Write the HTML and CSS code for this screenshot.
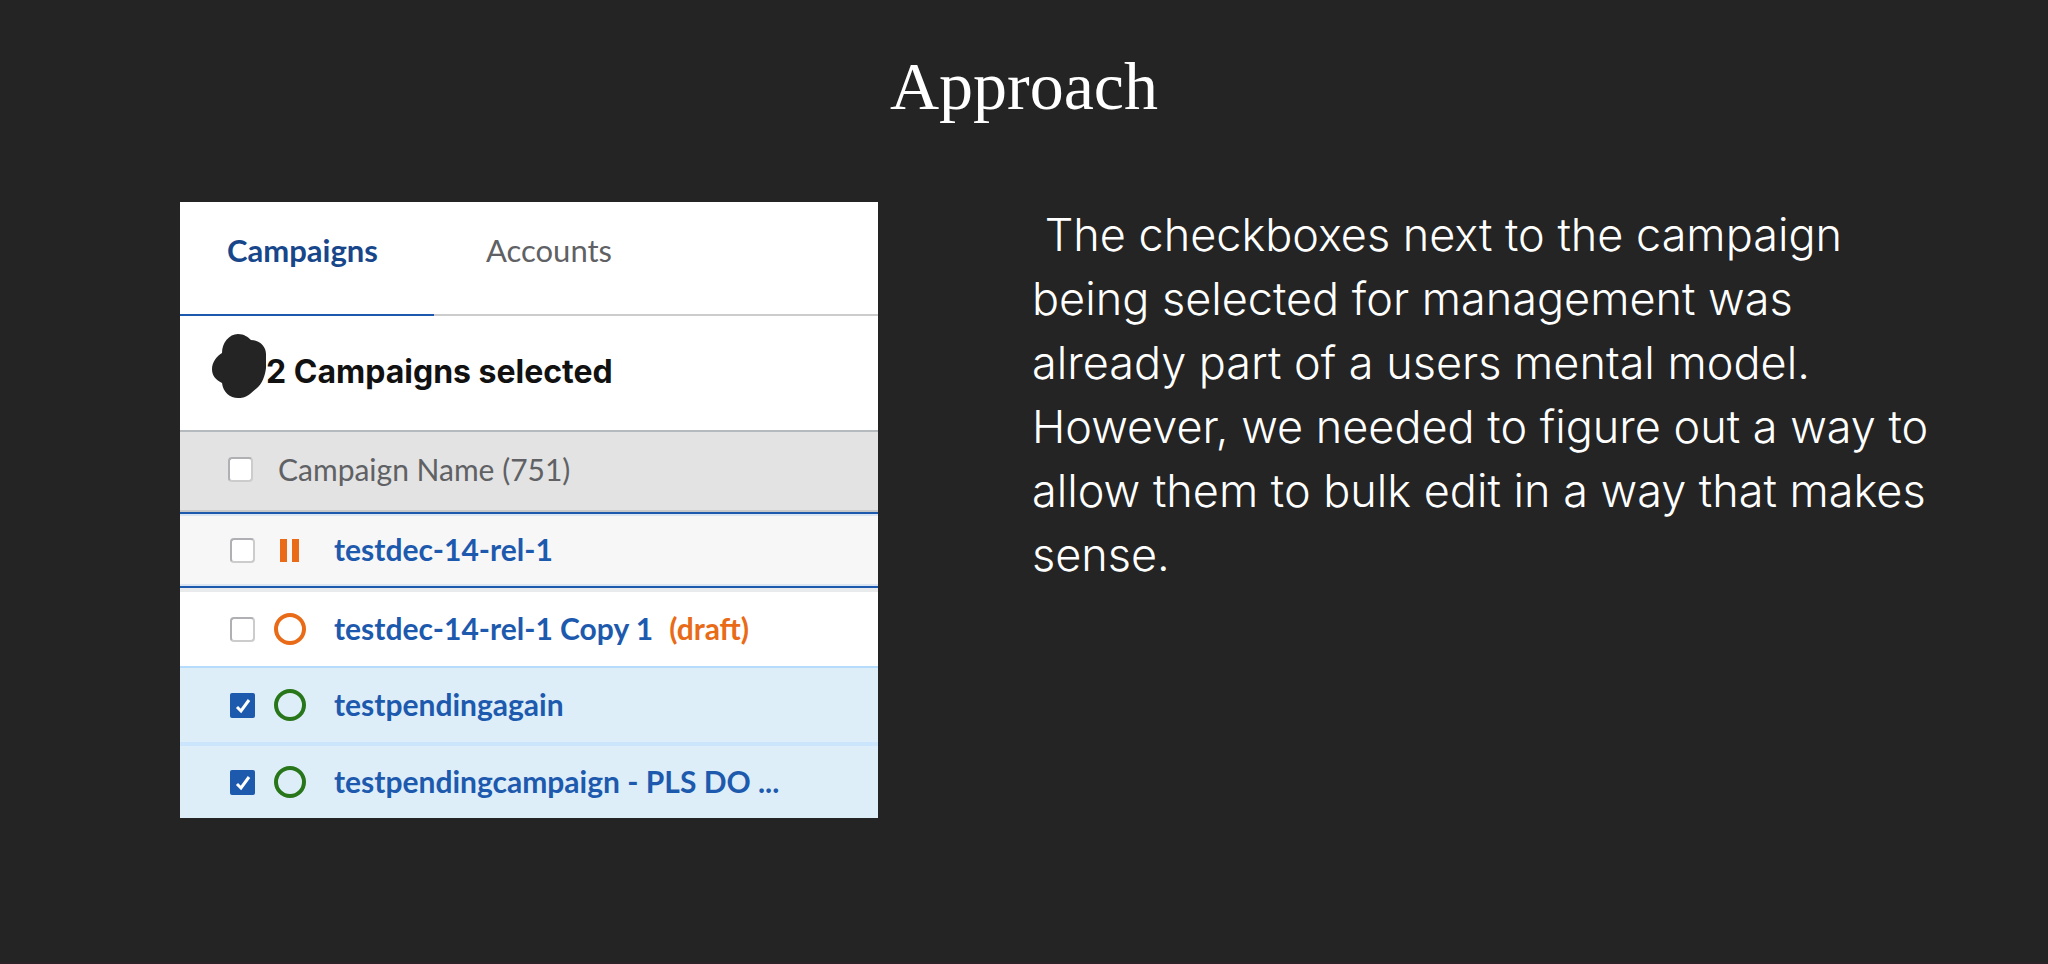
FILE: index.html
```html
<!DOCTYPE html>
<html lang="en">
<head>
<meta charset="utf-8">
<title>Approach</title>
<link rel="stylesheet" href="styles.css">
</head>
<body>
<main class="slide">
  <h1 class="slide-title">Approach</h1>
  <div class="columns">
    <section class="panel" aria-label="Campaign list">
      <nav class="tabs">
        <button class="tab tab-active" type="button">Campaigns</button>
        <button class="tab" type="button">Accounts</button>
      </nav>
      <div class="selection">
        <svg class="blob" viewBox="0 0 54 64" aria-hidden="true"><path d="M26 0C32 0 36 3 39 6C47 6 54 12 54 20L54 34C53 42 50 50 45 54L38 60C33 64 29 64 26 64C18 64 11 58 10 49C4 46 0 42 0 35C0 28 5 22 10 19C10 9 17 0 26 0Z"/></svg>
        <h2 class="selection-text">2 Campaigns selected</h2>
      </div>
      <table class="list">
        <colgroup><col class="col-check"><col class="col-status"><col></colgroup>
        <thead>
          <tr>
            <th class="cell-check"><input class="check" type="checkbox" aria-label="Select all campaigns"></th>
            <th class="head-name" colspan="2" scope="col">Campaign Name (751)</th>
          </tr>
        </thead>
        <tbody>
          <tr class="row-focus">
            <td class="cell-check"><input class="check" type="checkbox" aria-label="Select testdec-14-rel-1"></td>
            <td><svg class="status" viewBox="0 0 32 32" role="img" aria-label="Paused"><path class="pause" d="M6 5h7v23H6zM18 5h7v23h-7z"/></svg></td>
            <td class="cell-name"><a class="name" href="#">testdec-14-rel-1</a></td>
          </tr>
          <tr class="row-plain">
            <td class="cell-check"><input class="check" type="checkbox" aria-label="Select testdec-14-rel-1 Copy 1"></td>
            <td><svg class="status ring-draft" viewBox="0 0 32 32" role="img" aria-label="Draft"><circle cx="16" cy="16" r="14"/></svg></td>
            <td class="cell-name"><a class="name" href="#">testdec-14-rel-1 Copy 1</a><span class="draft">(draft)</span></td>
          </tr>
          <tr class="row-picked">
            <td class="cell-check"><input class="check" type="checkbox" checked aria-label="Select testpendingagain"></td>
            <td><svg class="status ring-live" viewBox="0 0 32 32" role="img" aria-label="Live"><circle cx="16" cy="16" r="14"/></svg></td>
            <td class="cell-name"><a class="name" href="#">testpendingagain</a></td>
          </tr>
          <tr class="row-picked row-last">
            <td class="cell-check"><input class="check" type="checkbox" checked aria-label="Select testpendingcampaign"></td>
            <td><svg class="status ring-live" viewBox="0 0 32 32" role="img" aria-label="Live"><circle cx="16" cy="16" r="14"/></svg></td>
            <td class="cell-name"><a class="name" href="#">testpendingcampaign - PLS DO ...</a></td>
          </tr>
        </tbody>
      </table>
    </section>
    <p class="copy">&nbsp;The checkboxes next to the campaign being selected for management was already part of a users mental model. However, we needed to figure out a way to allow them to bulk edit in a way that makes sense.</p>
  </div>
</main>
</body>
</html>
```
FILE: styles.css
```css
* { box-sizing: border-box; }

body {
  margin: 0;
  background: #242424;
  color: #fff;
  font-family: Lato, "Liberation Sans", sans-serif;
}

.slide {
  min-height: 100vh;
  padding: 46px 100px 48px 180px;
  border-bottom: 2px solid #2a2226;
}

.slide-title {
  margin: 0 0 76px -80px;
  font: 400 68px/80px "Liberation Serif", serif;
  text-align: center;
}

.columns {
  display: grid;
  grid-template-columns: 698fr 916fr;
  gap: 154px;
  align-items: start;
}

.panel {
  background: #fff;
  font-size: 30px;
  line-height: 36px;
}

.tabs {
  display: flex;
  border-bottom: 2px solid #ccc;
}

.tab {
  margin: 0 0 -2px;
  padding: 30px 52px 46px;
  border: 0;
  border-bottom: 2px solid transparent;
  background: none;
  color: #606164;
  font: inherit;
  font-size: 31px;
}

.tab-active {
  padding-left: 47px;
  padding-right: 56px;
  border-bottom-color: #1d5aae;
  color: #17478a;
  font-weight: 700;
}

.selection {
  display: flex;
  align-items: center;
  height: 114px;
  padding: 0 32px 14px;
}

.blob {
  flex: none;
  width: 54px;
  height: 64px;
  fill: #242424;
}

.selection-text {
  margin: 0;
  padding-top: 12px;
  color: #111;
  font-family: Inter, "Liberation Sans", sans-serif;
  font-size: 32px;
  font-weight: 700;
}

.list {
  width: 100%;
  border-spacing: 0;
  table-layout: fixed;
}

.col-check { width: 94px; }
.col-status { width: 60px; }

.list th,
.list td {
  padding: 0;
  text-align: left;
  vertical-align: middle;
}

.list th {
  height: 82px;
  border-top: 2px solid #b5babf;
  border-bottom: 2px solid #c8c8c8;
  background: #e3e3e3;
}

.list .head-name {
  padding-left: 4px;
  padding-bottom: 4px;
  color: #606164;
  font-weight: 400;
}

.list .cell-check { padding-left: 50px; }
.list .cell-name { padding-bottom: 3px; }

.list th.cell-check {
  padding-left: 48px;
  padding-bottom: 4px;
}

.row-focus td {
  height: 76px;
  border-top: 2px solid #1d5aae;
  border-bottom: 2px solid #1d5aae;
  background: #f7f7f7;
  box-shadow: inset 0 2px #dce6f3, inset 0 -2px #dce6f3;
}

.row-plain td {
  height: 80px;
  border-top: 4px solid #e8eaeb;
  border-bottom: 2px solid #b5dcfb;
}

.row-picked td {
  height: 74px;
  background: #deeef9;
}

.row-last td {
  height: 76px;
  border-top: 4px solid #cbe5fc;
}

.check {
  display: block;
  width: 25px;
  height: 25px;
  margin: 0;
  appearance: none;
  border: 2px solid #b0b0b4;
  border-right-color: #ccc;
  border-bottom-color: #ccc;
  border-radius: 4px;
  background: #fff;
}

.check:checked {
  border: 0;
  border-radius: 2px;
  background: #1d5aae url("data:image/svg+xml,%3Csvg xmlns='http://www.w3.org/2000/svg' viewBox='0 0 25 25'%3E%3Cpath d='M7 14l4 4L19 7' fill='none' stroke='white' stroke-width='3'/%3E%3C/svg%3E");
}

.status {
  display: block;
  width: 32px;
  height: 32px;
  fill: none;
  stroke-width: 4;
}

.pause { fill: #e96a17; }
.ring-draft { stroke: #e96a17; }
.ring-live { stroke: #28761a; }

.name {
  color: #1d5aae;
  font-weight: 700;
  text-decoration: none;
}

.draft {
  margin-left: 16px;
  color: #e96a17;
  font-weight: 700;
}

.copy {
  margin: 0;
  padding-top: 1px;
  font-family: Inter, "Liberation Sans", sans-serif;
  font-size: 45px;
  font-weight: 300;
  line-height: 64px;
}
```
